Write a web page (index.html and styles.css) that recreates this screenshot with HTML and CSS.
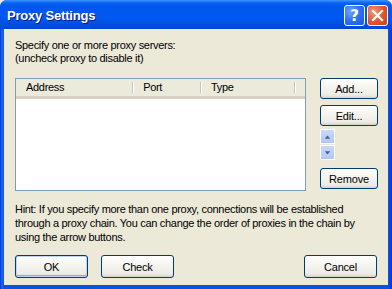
FILE: index.html
```html
<!DOCTYPE html>
<html>
<head>
<meta charset="utf-8">
<link rel="stylesheet" href="styles.css">
</head>
<body>
<div class="window">
  <div class="titlebar">
    <span class="title">Proxy Settings</span>
    <div class="caption-buttons">
      <div class="cap-btn help">
        <svg width="21" height="21" viewBox="0 0 21 21"><text x="10.5" y="16" text-anchor="middle" class="q">?</text></svg>
      </div>
      <div class="cap-btn close">
        <svg width="21" height="21" viewBox="0 0 21 21"><path d="M6 6 L15 15 M15 6 L6 15" stroke="#fff" stroke-width="2.2" stroke-linecap="square"/></svg>
      </div>
    </div>
  </div>
  <div class="client">
    <div class="intro">
      <div>Specify one or more proxy servers:</div>
      <div>(uncheck proxy to disable it)</div>
    </div>
    <div class="middle">
      <div class="listview">
        <div class="header">
          <div class="col c-addr">Address</div>
          <div class="col c-port">Port</div>
          <div class="col c-type">Type</div>
          <div class="col c-rest"></div>
        </div>
        <div class="rows"></div>
      </div>
      <div class="side">
        <button class="btn side-btn">Add...</button>
        <button class="btn side-btn">Edit...</button>
        <div class="arrows">
          <div class="arrow up"><svg width="14" height="14" viewBox="0 0 14 14"><path d="M4 9 L7 5.5 L10 9 Z" fill="#4D6185"/></svg></div>
          <div class="arrow down"><svg width="14" height="14" viewBox="0 0 14 14"><path d="M4 5 L7 8.5 L10 5 Z" fill="#4D6185"/></svg></div>
        </div>
        <button class="btn side-btn remove">Remove</button>
      </div>
    </div>
    <div class="hint">Hint: If you specify more than one proxy, connections will be established through a proxy chain. You can change the order of proxies in the chain by using the arrow buttons.</div>
    <div class="footer">
      <button class="btn foot-btn default">OK</button>
      <button class="btn foot-btn">Check</button>
      <div class="spacer"></div>
      <button class="btn foot-btn">Cancel</button>
    </div>
  </div>
</div>
</body>
</html>
```

FILE: styles.css
```css
html, body {
  margin: 0;
  padding: 0;
  background: #ECE9D8;
}
.window {
  width: 392px;
  height: 289px;
  box-sizing: border-box;
  display: flex;
  flex-direction: column;
  background: linear-gradient(to right, #0831D9 0, #166AEE 2px, #0855DD 4px, #0855DD 388px, #0831D9 392px);
  border-radius: 7px 7px 0 0;
  font-family: "Liberation Sans", Arial, sans-serif;
  font-size: 11px;
  letter-spacing: -0.3px;
  color: #000;
}
.titlebar {
  height: 29px;
  flex: none;
  display: flex;
  align-items: center;
  padding: 0 4px 0 7px;
  border-radius: 7px 7px 0 0;
  background: linear-gradient(to bottom, #3D95FF 0, #0A62F0 3px, #0058EE 6px, #0058EE 18px, #0051E0 24px, #0045D1 29px);
}
.title {
  color: #fff;
  font-family: "Liberation Sans", Arial, sans-serif;
  font-weight: bold;
  font-size: 13px;
  letter-spacing: -0.2px;
  text-shadow: 1px 1px 0 #0A1883;
  flex: 1;
  padding-top: 1px;
}
.caption-buttons {
  display: flex;
  gap: 2px;
  padding-top: 1px;
}
.cap-btn {
  width: 21px;
  height: 21px;
  box-sizing: border-box;
  border: 1px solid #fff;
  border-radius: 3px;
  display: flex;
  align-items: center;
  justify-content: center;
  overflow: hidden;
}
.cap-btn svg {
  flex: none;
  margin: -1px;
}
.help {
  background: radial-gradient(circle at 30% 30%, #6FA3FF 0, #2C6FF5 50%, #1F56E0 100%);
}
.close {
  background: radial-gradient(circle at 30% 30%, #F29A7C 0, #E2572F 50%, #C8401C 100%);
}
.q {
  fill: #fff;
  font-family: "DejaVu Sans", sans-serif;
  font-weight: bold;
  font-size: 15px;
}
.client {
  flex: 1;
  margin: 0 4px 4px 4px;
  background: #ECE9D8;
  padding: 10px 11px 0 11px;
  display: flex;
  flex-direction: column;
}
.intro div {
  line-height: 13px;
}
.middle {
  display: flex;
  margin-top: 13px;
  gap: 14px;
}
.listview {
  width: 291px;
  height: 113px;
  box-sizing: border-box;
  border: 1px solid #7F9DB9;
  background: #fff;
  display: flex;
  flex-direction: column;
}
.header {
  height: 20px;
  flex: none;
  display: flex;
  background: #EBEADB;
  box-sizing: border-box;
  border-bottom: 3px solid #D6D2C2;
}
.col {
  box-sizing: border-box;
  padding-left: 10px;
  line-height: 17px;
  position: relative;
}
.col::after {
  content: "";
  position: absolute;
  right: 0;
  top: 3px;
  height: 11px;
  width: 1px;
  background: #C7C5B2;
  box-shadow: 1px 0 0 #fff;
}
.c-addr { width: 121px; }
.c-port { width: 70px; }
.c-type { width: 97px; }
.c-rest { flex: 1; }
.c-rest::after { display: none; }
.rows { flex: 1; }
.side {
  display: flex;
  flex-direction: column;
  width: 58px;
}
.btn {
  font-family: "Liberation Sans", Arial, sans-serif;
  font-size: 11px;
  letter-spacing: -0.2px;
  color: #000;
  border: 1px solid #003C74;
  border-radius: 3px;
  background: linear-gradient(to bottom, #FFFFFF 0, #F6F5F0 40%, #ECEBE5 85%, #D6D0C5 100%);
  padding: 0;
  margin: 0;
  box-sizing: border-box;
}
.side-btn {
  width: 58px;
  height: 21px;
  margin-bottom: 6px;
}
.side-btn.remove {
  margin-top: 8px;
  margin-bottom: 0;
}
.arrows {
  display: flex;
  flex-direction: column;
  gap: 1px;
  width: 15px;
  margin-top: -3px;
}
.arrow {
  width: 15px;
  height: 15px;
  box-sizing: border-box;
  border: 1px solid #fff;
  background: linear-gradient(to bottom, #C9D9FC, #B2C7F7);
  display: flex;
  align-items: center;
  justify-content: center;
}
.hint {
  margin-top: 11px;
  line-height: 14px;
}
.footer {
  display: flex;
  margin-top: 11px;
  gap: 13px;
}
.spacer { flex: 1; }
.foot-btn {
  width: 73px;
  height: 23px;
}
.foot-btn.default {
  box-shadow: inset 0 0 0 1px #BCD4F6, inset 0 -1px 0 1px #89ADE4;
}
```
